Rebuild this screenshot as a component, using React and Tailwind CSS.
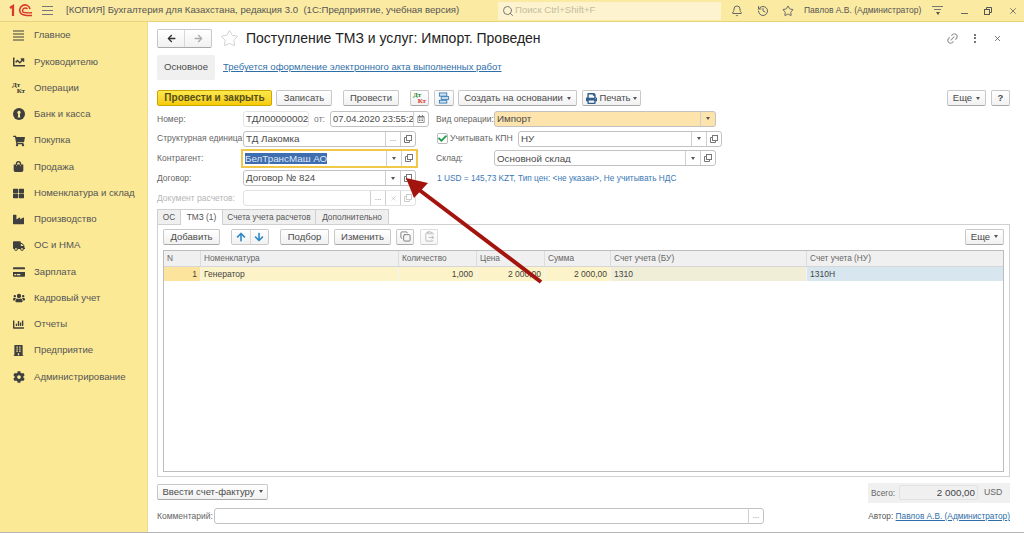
import React from "react";
import {
  FaChartLine, FaShoppingCart, FaShoppingBag, FaThLarge, FaIndustry, FaTruck,
  FaCreditCard, FaUsers, FaChartBar, FaBuilding, FaCog, FaPrint, FaArrowUp, FaArrowDown,
  FaArrowLeft, FaArrowRight, FaCheck, FaRegCalendarAlt,
} from "react-icons/fa";
import { Bell, History, Star, Link2, X, Search, Copy, ClipboardPaste } from "lucide-react";

const ink = "text-[#4b4b4b]";

function DtKt({ red }) {
  return (
    <span className="relative block w-[13px] h-[13px] font-bold text-[7px] leading-none font-['Liberation_Serif',serif]">
      <span className={`absolute left-0 top-0 ${red ? "text-[#1c8a2c]" : "text-[#333]"}`}>Дт</span>
      <span className={`absolute right-0 bottom-0 ${red ? "text-[#d8342a]" : "text-[#333]"}`}>Кт</span>
    </span>
  );
}

function KeyHole() {
  return (
    <svg width="12" height="12" viewBox="0 0 16 16">
      <circle cx="8" cy="8" r="8" fill="#3f3f3f" />
      <circle cx="8" cy="6" r="2.2" fill="#fbe995" />
      <path d="M7 7h2l.7 5.5H6.3z" fill="#fbe995" />
    </svg>
  );
}

function Lines() {
  return (
    <svg width="11" height="11" viewBox="0 0 11 11" stroke="#3f3f3f" strokeWidth="1.2">
      <path d="M0 1h11M0 4h11M0 7h11M0 10h11" />
    </svg>
  );
}

const menu = [
  ["Главное", <Lines />],
  ["Руководителю", <FaChartLine size={12} />],
  ["Операции", <DtKt />],
  ["Банк и касса", <KeyHole />],
  ["Покупка", <FaShoppingCart size={12} />],
  ["Продажа", <FaShoppingBag size={11} />],
  ["Номенклатура и склад", <FaThLarge size={11} />],
  ["Производство", <FaIndustry size={11} />],
  ["ОС и НМА", <FaTruck size={12} />],
  ["Зарплата", <FaCreditCard size={12} />],
  ["Кадровый учет", <FaUsers size={12} />],
  ["Отчеты", <FaChartBar size={11} />],
  ["Предприятие", <FaBuilding size={11} />],
  ["Администрирование", <FaCog size={12} />],
];

function Logo() {
  return (
    <svg width="23" height="14" viewBox="0 0 23 14" fill="none" stroke="#d8392b">
      <path d="M1 4 L4 2 V12" strokeWidth="2.2" />
      <path d="M21 5 A5.2 5.2 0 1 0 12 9.5 Q14 11.8 23 11.5" strokeWidth="1.6" />
      <path d="M18.4 5.2 A2.6 2.6 0 1 0 14 8 Q15 9 23 8.8" strokeWidth="1.4" />
    </svg>
  );
}

function Btn({ children, w, className = "" }) {
  return (
    <button
      style={{ width: w }}
      className={`h-4 shrink-0 flex items-center justify-center gap-1 whitespace-nowrap rounded-[2px] border border-[#c8c8c8] border-b-[#a8a8a8] bg-gradient-to-b from-white to-[#f1f1f1] text-[9.5px] leading-none ${ink} ${className}`}
    >
      {children}
    </button>
  );
}

function Caret() {
  return <span className="inline-block w-0 h-0 border-x-[2.5px] border-x-transparent border-t-[3px] border-t-[#555]" />;
}

function OpenIcon({ muted }) {
  return (
    <svg width="8" height="8" viewBox="0 0 8 8" fill="none" stroke={muted ? "#ccc" : "#777"}>
      <rect x="2.5" y="0.5" width="5" height="5" />
      <path d="M2.5 2.5H.5v5h5V5.5" />
    </svg>
  );
}

function Seg({ children }) {
  return <span className="w-[15px] h-full shrink-0 flex items-center justify-center border-l border-[#cfcfcf] text-[#777] text-[8px]">{children}</span>;
}

function Field({ w, value, dots, caret, open, x, bg = "bg-white", text = ink, className = "", disabled }) {
  return (
    <div
      style={{ width: w }}
      className={`h-4 shrink-0 flex items-center rounded-[3px] border ${disabled ? "border-[#e2e2e2]" : "border-[#c2c2c2]"} text-[9.8px] leading-none overflow-hidden ${bg} ${className}`}
    >
      <span className={`flex-1 pl-[2px] whitespace-nowrap overflow-hidden ${text}`}>{value}</span>
      {dots && <Seg>...</Seg>}
      {caret && <Seg><Caret /></Seg>}
      {x && <Seg><X size={7} color="#bbb" /></Seg>}
      {open && <Seg><OpenIcon muted={disabled} /></Seg>}
    </div>
  );
}

function Label({ w, children, muted }) {
  return <span style={{ width: w }} className={`shrink-0 text-[8.5px] whitespace-nowrap ${muted ? "text-[#b5b5b5]" : "text-[#666]"}`}>{children}</span>;
}

const cols = [
  { w: 37, title: "N", val: "1", right: true, bg: "bg-[#fce49c]" },
  { w: 198, title: "Номенклатура", val: "Генератор", bg: "bg-[#fdf3c8]" },
  { w: 78, title: "Количество", val: "1,000", right: true, bg: "bg-[#fdf3c8]" },
  { w: 68, title: "Цена", val: "2 000,00", right: true, bg: "bg-[#fdf3c8]" },
  { w: 66, title: "Сумма", val: "2 000,00", right: true, bg: "bg-[#fdf3c8]" },
  { w: 196, title: "Счет учета (БУ)", val: "1310", bg: "bg-[#f1eed8]" },
  { w: 197, title: "Счет учета (НУ)", val: "1310Н", bg: "bg-[#d8e7ef]" },
];

export default function App() {
  return (
    <div className="relative w-[1024px] h-[533px] overflow-hidden bg-white flex flex-col font-['Liberation_Sans',Arial,sans-serif] border-b border-[#b5b5b5]">
      {/* top bar */}
      <header className="h-[22px] shrink-0 flex items-center bg-[#fbeaa2] border-b border-[#e8d27a] text-[9.6px] text-[#555]">
        <span className="ml-[9px]"><Logo /></span>
        <span className="ml-[10px] flex flex-col gap-[3px]">
          <i className="block w-[11px] h-px bg-[#777]" />
          <i className="block w-[11px] h-px bg-[#777]" />
          <i className="block w-[11px] h-px bg-[#777]" />
        </span>
        <span className="ml-[13px] w-[432px] whitespace-nowrap">[КОПИЯ] Бухгалтерия для Казахстана, редакция 3.0&nbsp; (1С:Предприятие, учебная версия)</span>
        <div className="w-[223px] h-[18px] flex items-center gap-[1px] pl-1 bg-[#fdf3cf] text-[#c4bd9e]">
          <Search size={12} color="#777" />
          Поиск Ctrl+Shift+F
        </div>
        <Bell size={12} className="ml-[10px]" color="#666" />
        <History size={12} className="ml-[14px]" color="#666" />
        <Star size={12} className="ml-[13px]" color="#666" />
        <span className="ml-[10px] w-[117px] text-[8.5px] whitespace-nowrap">Павлов А.В. (Администратор)</span>
        <span className="ml-[11px] flex flex-col items-center gap-[2px]">
          <i className="block w-[11px] h-px bg-[#777]" />
          <i className="block w-[7px] h-px bg-[#777]" />
          <Caret />
        </span>
        <i className="block ml-[18px] mt-[6px] w-[7px] h-px bg-[#666]" />
        <span className="ml-[16px]"><svg width="8" height="8" viewBox="0 0 8 8" fill="none" stroke="#555"><rect x=".5" y="2.5" width="5" height="5" /><path d="M2.5 2.5v-2h5v5h-2" /></svg></span>
        <X size={10} className="ml-[16px]" color="#666" />
      </header>

      <div className="flex flex-1 min-h-0">
        {/* sidebar */}
        <aside className="w-[148px] shrink-0 bg-[#fbe995] border-r border-[#eddc8c] pt-[0.5px]">
          {menu.map(([name, icon]) => (
            <div key={name} className="h-[26.25px] flex items-center text-[9.6px] text-[#555]">
              <span className="w-[34px] pl-[3px] flex justify-center text-[#3f3f3f] shrink-0">{icon}</span>
              <span className="whitespace-nowrap">{name}</span>
            </div>
          ))}
        </aside>

        {/* document */}
        <main className="flex-1 min-w-0 pl-[9px] pr-[14px] flex flex-col">
          <div className="h-[32px] flex items-center relative">
            <div className="w-[55px] h-[19px] flex rounded-[2px] border border-[#c8c8c8] border-b-[#a8a8a8] bg-gradient-to-b from-white to-[#f1f1f1]">
              <span className="flex-1 flex items-center justify-center border-r border-[#d8d8d8]"><FaArrowLeft size={9} color="#333" /></span>
              <span className="flex-1 flex items-center justify-center"><FaArrowRight size={9} color="#aaa" /></span>
            </div>
            <Star size={19} className="ml-[8px]" color="#cfcfcf" strokeWidth={1.2} />
            <h1 className="ml-[7px] text-[14px] leading-none text-[#222] whitespace-nowrap">Поступление ТМЗ и услуг: Импорт. Проведен</h1>
            <div className="ml-auto flex items-center">
              <Link2 size={13} color="#999" className="-rotate-45" />
              <span className="ml-[15px] flex flex-col gap-[1.5px]">
                <i className="block w-[2px] h-[2px] bg-[#777]" />
                <i className="block w-[2px] h-[2px] bg-[#777]" />
                <i className="block w-[2px] h-[2px] bg-[#777]" />
              </span>
              <X size={9} color="#555" className="ml-[17px] mr-[8px]" />
            </div>
          </div>

          <div className="h-[25px] flex items-center mt-[1px]">
            <span className={`w-[58px] h-full flex items-center justify-center bg-[#f0f0f0] rounded-[2px] text-[9.6px] ${ink}`}>Основное</span>
            <a className="ml-2 text-[9.5px] text-[#2f6fa8] underline whitespace-nowrap">Требуется оформление электронного акта выполненных работ</a>
          </div>

          {/* command bar */}
          <div className="h-4 mt-[10px] flex items-center">
            <button className="w-[115px] h-4 rounded-[2px] border border-[#c9a800] bg-gradient-to-b from-[#fde94a] to-[#f6ca00] text-[10px] font-bold leading-none text-[#55501a] shrink-0 whitespace-nowrap">Провести и закрыть</button>
            <Btn w={56} className="ml-[4px]">Записать</Btn>
            <Btn w={56} className="ml-[11px]">Провести</Btn>
            <Btn w={19} className="ml-[11px]"><DtKt red /></Btn>
            <Btn w={20} className="ml-[5px]">
              <svg width="12" height="12" viewBox="0 0 13 13" fill="#cfe3f2" stroke="#3d7fb5"><rect x="1.5" y="1" width="8" height="3.5" /><rect x="3.5" y="5" width="8" height="3" /><rect x="1.5" y="9" width="8" height="3" /></svg>
            </Btn>
            <Btn w={119} className="ml-[4px]">Создать на основании <Caret /></Btn>
            <Btn w={59} className="ml-[5px] !gap-[2px]"><FaPrint size={11} color="#2f5f8a" />Печать <Caret /></Btn>
            <Btn w={39} className="ml-auto">Еще <Caret /></Btn>
            <Btn w={19} className="ml-[5px] font-bold">?</Btn>
          </div>

          {/* form */}
          <div className="mt-[3px] flex">
            <div className="w-[279px] shrink-0">
              <div className="h-[19.8px] flex items-center">
                <Label w={86}>Номер:</Label>
                <Field w={66} value="ТДЛ00000002" className="!border-[#e4e4e4]" />
                <span className="w-[21px] text-center text-[8.5px] text-[#777]">от:</span>
                <div className="w-[99px] h-4 flex items-center rounded-[3px] border border-[#c2c2c2] text-[9.4px] leading-none overflow-hidden">
                  <span className={`flex-1 pl-[2px] whitespace-nowrap overflow-hidden ${ink}`}>07.04.2020 23:55:2</span>
                  <Seg><FaRegCalendarAlt size={8} /></Seg>
                </div>
              </div>
              <div className="h-[19.8px] flex items-center">
                <Label w={86}>Структурная единица:</Label>
                <Field w={173} value="ТД Лакомка" dots open />
              </div>
              <div className="h-[19.8px] flex items-center">
                <Label w={84}>Контрагент:</Label>
                <div className="w-[177px] h-[19px] flex items-center border-2 border-[#f2c84b] text-[9.8px] leading-none">
                  <span className="flex-1 pl-[2px] flex items-center"><span className="bg-[#3e6db0] text-[#dfe8f5] py-[1px]">БелТрансМаш АО</span></span>
                  <Seg><Caret /></Seg>
                  <Seg><OpenIcon /></Seg>
                </div>
              </div>
              <div className="h-[19.8px] flex items-center">
                <Label w={86}>Договор:</Label>
                <Field w={173} value="Договор № 824" caret open />
              </div>
              <div className="h-[19.8px] flex items-center">
                <Label w={86} muted>Документ расчетов:</Label>
                <Field w={173} value="" dots x open disabled />
              </div>
            </div>

            <div className="flex-1 min-w-0">
              <div className="h-[19.8px] flex items-center">
                <Label w={58}>Вид операции:</Label>
                <Field w={222} value="Импорт" caret bg="bg-[#fde3ac]" />
              </div>
              <div className="h-[19.8px] flex items-center">
                <span className="w-[11px] h-[11px] ml-[1px] flex items-center justify-center border border-[#bcbcbc] rounded-[2px] bg-white"><FaCheck size={9} color="#1e9a4a" /></span>
                <span className="ml-[2px] w-[68px] text-[8.7px] text-[#666] whitespace-nowrap">Учитывать КПН</span>
                <Field w={204} value="НУ" caret open />
              </div>
              <div className="h-[19.8px] flex items-center">
                <Label w={58}>Склад:</Label>
                <Field w={222} value="Основной склад" caret open />
              </div>
              <div className="h-[19.8px] flex items-center pl-[1px] text-[8.3px] text-[#3a78b5] whitespace-nowrap">
                1 USD = 145,73 KZT, Тип цен: &lt;не указан&gt;, Не учитывать НДС
              </div>
            </div>
          </div>

          {/* tabs */}
          <div className="h-[16px] mt-[1px] flex items-stretch text-[8.3px] text-[#555] -mb-px relative z-10">
            <span className="w-[24px] flex items-center justify-center bg-[#efefef] border border-[#d0d0d0]">ОС</span>
            <span className="w-[41px] flex items-center justify-center bg-white border-t border-[#d0d0d0]">ТМЗ (1)</span>
            <span className="w-[94px] flex items-center justify-center bg-[#efefef] border border-[#d0d0d0] whitespace-nowrap">Счета учета расчетов</span>
            <span className="w-[73px] flex items-center justify-center bg-[#efefef] border border-[#d0d0d0] border-l-0">Дополнительно</span>
          </div>
          <section className="h-[253px] shrink-0 border border-[#d0d0d0] px-[5px] pt-[4px] flex flex-col">
            <div className="h-4 flex items-center">
              <Btn w={57}>Добавить</Btn>
              <div className="ml-[11px] w-[38px] h-4 flex rounded-[2px] border border-[#c8c8c8] bg-gradient-to-b from-white to-[#f1f1f1]">
                <span className="flex-1 flex items-center justify-center border-r border-[#d8d8d8]"><FaArrowUp size={10} color="#2b86c5" /></span>
                <span className="flex-1 flex items-center justify-center"><FaArrowDown size={10} color="#2b86c5" /></span>
              </div>
              <Btn w={49} className="ml-[11px]">Подбор</Btn>
              <Btn w={57} className="ml-[5px]">Изменить</Btn>
              <Btn w={18} className="ml-[5px]"><Copy size={11} color="#777" /></Btn>
              <Btn w={18} className="ml-[6px] opacity-60"><ClipboardPaste size={11} color="#888" /></Btn>
              <Btn w={39} className="ml-auto">Еще <Caret /></Btn>
            </div>

            <div className="mt-[5px] h-[222px] border border-[#bdbdbd] overflow-hidden">
              <div className="h-[16px] flex bg-[#f0f0f0] border-b border-[#d6d6d6] text-[8.3px] text-[#666]">
                {cols.map((c) => (
                  <span key={c.title} style={{ width: c.w }} className="shrink-0 pl-[3px] flex items-center border-r border-[#dcdcdc] whitespace-nowrap">{c.title}</span>
                ))}
              </div>
              <div className="h-[14px] flex text-[8.5px] text-[#444]">
                {cols.map((c) => (
                  <span key={c.title} style={{ width: c.w }} className={`shrink-0 px-[3px] flex items-center whitespace-nowrap border-r border-[#f3f3f3] ${c.bg} ${c.right ? "justify-end" : ""}`}>{c.val}</span>
                ))}
              </div>
            </div>
          </section>

          {/* footer */}
          <div className="mt-[6px] h-[21px] flex items-start">
            <Btn w={111} className="mt-[1px]">Ввести счет-фактуру <Caret /></Btn>
            <div className="ml-auto w-[142px] h-[20px] bg-[#f0f0f0] flex items-center text-[8.3px] text-[#666]">
              <span className="w-[31px] pl-[3px]">Всего:</span>
              <span className="w-[79px] h-[15px] flex items-center justify-end pr-[2px] rounded-[2px] border border-[#e2e2e2] text-[9.8px] text-[#444]">2 000,00</span>
              <span className="ml-[6px] text-[8.7px]">USD</span>
            </div>
          </div>
          <div className="mt-[4px] h-4 flex items-center">
            <Label w={57}>Комментарий:</Label>
            <Field w={550} value="" dots />
            <span className="ml-auto text-[8.3px] text-[#555] whitespace-nowrap">Автор: <a className="text-[#2f6fa8] underline">Павлов А.В. (Администратор)</a></span>
          </div>
        </main>
      </div>

      {/* annotation arrow */}
      <svg className="absolute left-[400px] top-[170px] pointer-events-none" width="150" height="120" viewBox="400 170 150 120">
        <path d="M541 282 L418 189" stroke="#a3140f" strokeWidth="4" />
        <path d="M406 178 L428 183 L414 198 Z" fill="#a3140f" />
      </svg>
    </div>
  );
}
